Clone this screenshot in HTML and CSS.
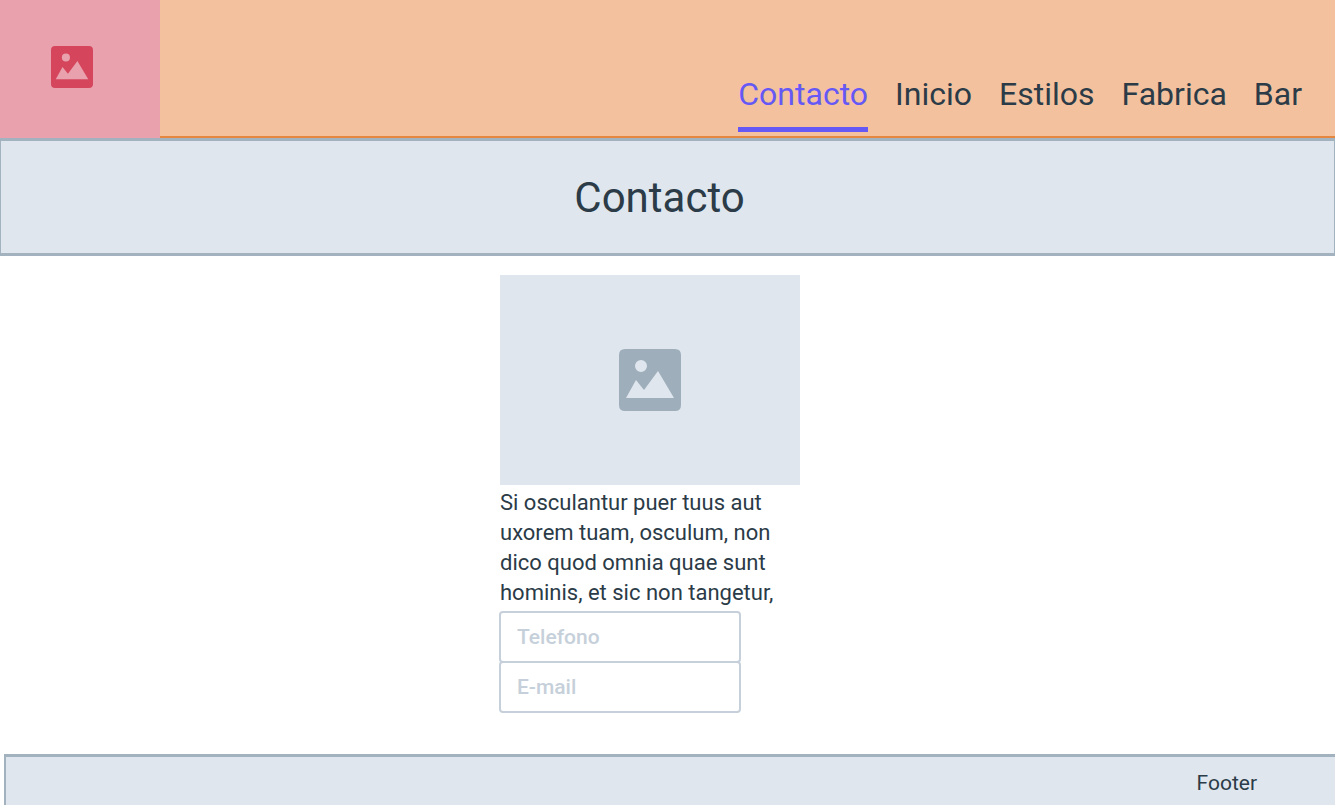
FILE: index.html
```html
<!DOCTYPE html>
<html lang="es">
<head>
<meta charset="utf-8">
<title>Contacto</title>
<link rel="stylesheet" href="styles.css">
</head>
<body>
<header class="header">
  <div class="logo">
    <svg class="logo-icon" viewBox="0 0 62 62" aria-hidden="true"><path fill="currentColor" fill-rule="evenodd" d="M6 0H56Q62 0 62 6V56Q62 62 56 62H6Q0 62 0 56V6Q0 0 6 0ZM22 11A6 6 0 1 0 22 23A6 6 0 1 0 22 11ZM7 49H55L39 22L25 41L17 31Z"/></svg>
  </div>
  <nav class="nav">
    <a class="nav-link active" href="#contacto" aria-current="page">Contacto</a>
    <a class="nav-link" href="#inicio">Inicio</a>
    <a class="nav-link" href="#estilos">Estilos</a>
    <a class="nav-link" href="#fabrica">Fabrica</a>
    <a class="nav-link" href="#bar">Bar</a>
  </nav>
</header>
<section class="banner"><h1 class="title">Contacto</h1></section>
<main class="main">
  <div class="column">
    <div class="picture">
      <svg class="picture-icon" viewBox="0 0 62 62" aria-hidden="true"><path fill="currentColor" fill-rule="evenodd" d="M6 0H56Q62 0 62 6V56Q62 62 56 62H6Q0 62 0 56V6Q0 0 6 0ZM22 11A6 6 0 1 0 22 23A6 6 0 1 0 22 11ZM7 49H55L39 22L25 41L17 31Z"/></svg>
    </div>
    <p class="text">Si osculantur puer tuus aut uxorem tuam, osculum, non dico quod omnia quae sunt hominis, et sic non tangetur,</p>
    <form class="form">
      <input class="field" type="tel" placeholder="Telefono" aria-label="Telefono">
      <input class="field" type="email" placeholder="E-mail" aria-label="E-mail">
    </form>
  </div>
</main>
<footer class="footer">Footer</footer>
</body>
</html>
```
FILE: styles.css
```css
* { box-sizing: border-box; }

body {
  margin: 0;
  min-height: 100vh;
  display: flex;
  flex-direction: column;
  background: #fff;
  color: #2b3b47;
  font-family: Roboto, "Liberation Sans", sans-serif;
}

.header {
  display: flex;
  background: linear-gradient(#e5873f, #e5873f) bottom / 100% 2px no-repeat #f4c19e;
}

.logo {
  width: 160px;
  height: 138px;
  padding: 46px 51px;
  background: #e9a1ad;
  color: #d5455c;
}

.logo-icon {
  display: block;
  width: 42px;
  height: 42px;
}

.nav {
  flex: 1;
  display: flex;
  justify-content: flex-end;
  align-items: flex-end;
  gap: 27px;
  padding: 0 33px 6px 0;
}

.nav-link {
  padding-bottom: 13px;
  border-bottom: 5px solid transparent;
  color: inherit;
  font-size: 32px;
  line-height: 40px;
  text-decoration: none;
}

.nav-link.active {
  border-color: #6558f5;
  color: #6558f5;
}

.banner {
  padding: 33px 16px 31px 0;
  border: 3px solid #a3b2bf;
  border-width: 3px 1px;
  background: #dfe6ee;
  text-align: center;
}

.title {
  margin: 0;
  font-size: 42px;
  font-weight: 400;
  line-height: 48px;
}

.main {
  display: flex;
  justify-content: center;
  padding: 19px 35px 41px 0;
}

.column { width: 300px; }

.picture {
  display: flex;
  align-items: center;
  justify-content: center;
  height: 210px;
  background: #dfe6ee;
  color: #9eaebb;
}

.picture-icon {
  width: 62px;
  height: 62px;
}

.text {
  margin: 3px 0;
  font-size: 22px;
  line-height: 30px;
}

.form {
  display: flex;
  flex-direction: column;
  width: 242px;
  margin-left: -1px;
}

.field {
  width: 100%;
  height: 52px;
  padding: 0 16px;
  border: 2px solid #c6d0da;
  border-radius: 4px;
  background: transparent;
  color: inherit;
  font: 500 21px/30px Roboto, "Liberation Sans", sans-serif;
}

.field + .field { margin-top: -2px; }

.field::placeholder {
  color: #c6d0da;
  opacity: 1;
}

.footer {
  flex: 1;
  margin-left: 4px;
  padding: 12px 78px 8px 16px;
  border: solid #a3b2bf;
  border-width: 3px 0 0 2px;
  background: #dfe6ee;
  font-size: 21px;
  line-height: 28px;
  text-align: right;
}
```
